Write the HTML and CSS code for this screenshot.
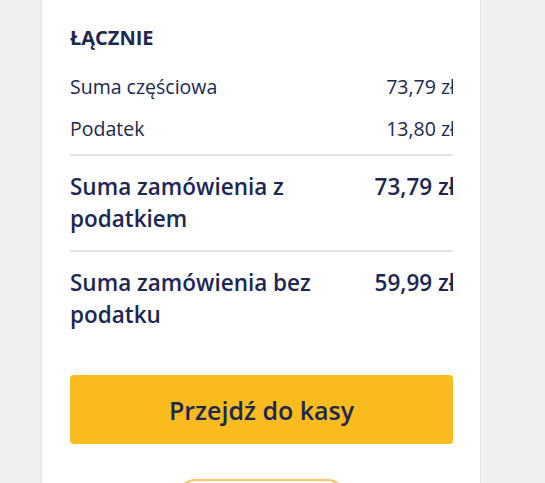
FILE: index.html
```html
<!DOCTYPE html>
<html lang="pl">
<head>
<meta charset="utf-8">
<link rel="stylesheet" href="styles.css">
</head>
<body>
<div class="page">
  <section class="card">
    <h2 class="title">ŁĄCZNIE</h2>
    <div class="rows">
      <div class="row small">
        <span class="label">Suma częściowa</span>
        <span class="value">73,79 zł</span>
      </div>
      <div class="row small">
        <span class="label">Podatek</span>
        <span class="value">13,80 zł</span>
      </div>
      <div class="row big divided">
        <span class="label">Suma zamówienia z podatkiem</span>
        <span class="value">73,79 zł</span>
      </div>
      <div class="row big divided">
        <span class="label">Suma zamówienia bez podatku</span>
        <span class="value">59,99 zł</span>
      </div>
    </div>
    <button class="checkout">Przejdź do kasy</button>
    <div class="pill-wrap"><div class="pill">Zapłać później</div></div>
  </section>
</div>
</body>
</html>
```
FILE: styles.css
```css
html, body {
  margin: 0;
  padding: 0;
  background: #f0f0f0;
  font-family: "Open Sans", "Noto Sans", sans-serif;
  color: #1c2752;
}
.page {
  padding-left: 41px;
  height: 483px;
  overflow: hidden;
}
.card {
  width: 440px;
  box-sizing: border-box;
  background: #fff;
  border-left: 1px solid #e4e4e4;
  border-right: 1px solid #e4e4e4;
  padding: 26px 27px 40px 28px;
  min-height: 520px;
}
.title {
  margin: 0;
  font-size: 20px;
  font-weight: 700;
  line-height: 24px;
}
.rows {
  margin-top: 24px;
}
.row {
  display: grid;
  grid-template-columns: 1fr auto;
  column-gap: 20px;
  overflow: hidden;
}
.row .value {
  margin-right: -2px;
  text-align: right;
  white-space: nowrap;
}
.row.small {
  font-size: 19.5px;
  line-height: 26px;
  padding-bottom: 16px;
}
.row.small + .row.small {
  padding-bottom: 12px;
}
.row.big {
  font-size: 22.5px;
  font-weight: 600;
  line-height: 32px;
  padding: 15px 0 15px;
}
.row.big:last-child {
  padding-bottom: 0;
}
.divided {
  border-top: 2px solid #e3e3e3;
}
.checkout {
  display: block;
  width: 100%;
  height: 69px;
  margin-top: 44px;
  border: none;
  border-radius: 4px;
  background: #f9bb1e;
  color: #1c2752;
  font-family: "Open Sans", "Noto Sans", sans-serif;
  font-size: 25px;
  font-weight: 600;
  padding: 0;
}
.pill-wrap {
  display: flex;
  justify-content: center;
  margin-top: 35px;
}
.pill {
  width: 171px;
  height: 40px;
  box-sizing: border-box;
  border: 2px solid #fbc36a;
  border-radius: 20px;
  background: #fffaf0;
  color: #9a9a9a;
  font-size: 14px;
  line-height: 36px;
  text-align: center;
}
```
